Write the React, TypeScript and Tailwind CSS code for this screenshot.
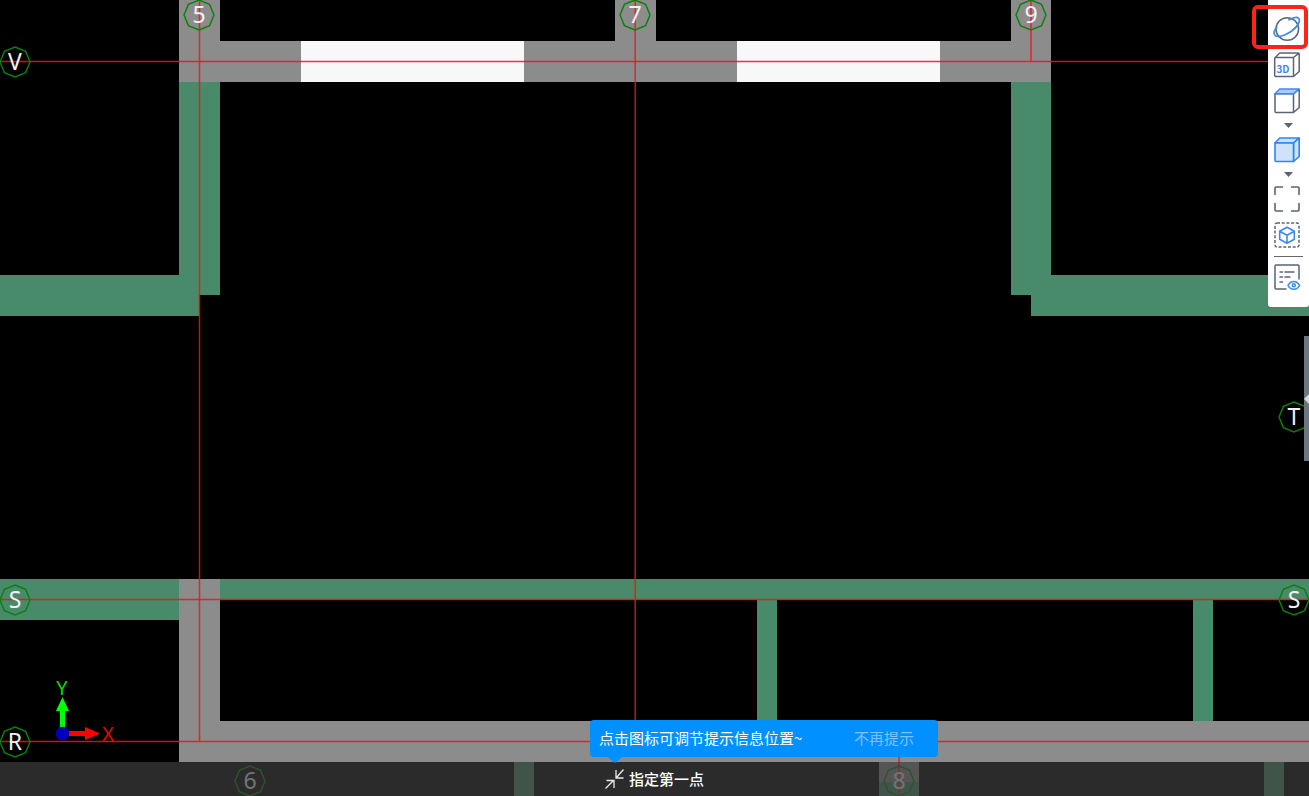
import type { ReactNode } from 'react'

type Label = { text: string; x: number; y: number }

const LABELS: Label[] = [
    { text: '5', x: 199, y: 15 },
    { text: '7', x: 635, y: 15 },
    { text: '9', x: 1031, y: 15 },
    { text: 'V', x: 15, y: 62 },
    { text: 'T', x: 1294, y: 417 },
    { text: 'S', x: 15, y: 600 },
    { text: 'S', x: 1294, y: 600 },
    { text: 'R', x: 15, y: 742 },
    { text: '6', x: 250, y: 781 },
    { text: '8', x: 899, y: 781 },
]

const AxisLabel = ({ text, x, y }: Label) => (
    <g transform={`translate(${x} ${y})`}>
        <polygon
            points="0,-15 10.6,-10.6 15,0 10.6,10.6 0,15 -10.6,10.6 -15,0 -10.6,-10.6"
            fill="none"
            stroke="#0a800a"
            strokeWidth="1.4"
        />
        <text y="8" textAnchor="middle" fontSize="23" fill="#f2f2f2">
            {text}
        </text>
    </g>
)

const FloorPlan = () => (
    <svg
        className="absolute inset-0 h-full w-full font-['Noto_Sans',sans-serif]"
        viewBox="0 0 1309 796"
        preserveAspectRatio="xMinYMin slice"
        role="img"
        aria-label="平面图"
    >
        {/* shear walls */}
        <g fill="#478b6a">
            <path d="M179 82h41v213h-21v21H0v-41h179z" />
            <path d="M1011 82h40v193h258v41h-278v-21h-20z" />
            <path d="M0 579h179v41H0z" />
            <path d="M219 579h1090v21H219z" />
            <path d="M757 600h20v121h-20z" />
            <path d="M1193 600h20v121h-20z" />
            <path d="M514 762h20v34h-20z" />
            <path d="M1264 762h20v34h-20z" />
            <path d="M879 782h40v14h-40z" />
        </g>

        {/* beams and columns */}
        <g fill="#8c8c8c">
            <path d="M179 0h41v41h395V0h41v41h355V0h40v82H179z" />
            <path d="M179 579h41v142h1089v41H179z" />
            <path d="M879 762h40v20h-40z" />
        </g>

        {/* windows */}
        <g fill="#f8f8f8">
            <path d="M301 41h223v41H301z" />
            <path d="M737 41h203v41H737z" />
        </g>

        {/* grid axes */}
        <g stroke="#f01414" strokeOpacity="0.85" strokeWidth="1.5">
            <path d="M199.500 0V741" />
            <path d="M635.200 0V741" />
            <path d="M1031 0V62" />
            <path d="M899 741V796" />
            <path d="M0 61.600H1309" />
            <path d="M0 599.600H1309" />
            <path d="M0 741.500H1309" />
        </g>

        {LABELS.map((l) => (
            <AxisLabel key={`${l.text}-${l.x}`} {...l} />
        ))}

        {/* coordinate system */}
        <path d="M60 728v-17h-4l6.500-14 6.500 14h-4v17z" fill="#00ff00" />
        <path d="M69 731h16v-4l15 6.500-15 6.500v-4H69z" fill="#ff0000" />
        <circle cx="62.500" cy="733.500" r="6.800" fill="#0000b8" />
        <g fontSize="20" textAnchor="middle">
            <text x="62" y="695" fill="#00d800">
                Y
            </text>
            <text x="108" y="741" fill="#e80000">
                X
            </text>
        </g>
    </svg>
)

const Icon = ({ children }: { children: ReactNode }) => (
    <svg
        className="h-[26px] w-[26px] overflow-visible"
        viewBox="0 0 26 26"
        fill="none"
        stroke="#5b6475"
        strokeWidth="1.5"
        strokeLinecap="round"
        strokeLinejoin="round"
        aria-hidden="true"
    >
        {children}
    </svg>
)

const OrbitIcon = () => (
    <Icon>
        <circle cx="13.300" cy="13" r="11.300" />
        <path
            d="M15 3.800C19 1.600 23 .8 24.600 2.300C27 5 23.500 11 17 15.500C10.500 20 3.500 21.800 1 19.300C-.6 17.500 .3 14 2.800 11"
            stroke="#3d8bf2"
            strokeWidth="1.700"
        />
    </Icon>
)

const Cube3dIcon = () => (
    <Icon>
        <path d="M1.700 5.500h17.800v19H1.700a1 1 0 0 1-1-1v-17a1 1 0 0 1 1-1zM1 5.700L5.700 1h18.500q1 0 1 1v17.500l-5.700 5M19.500 5.500L25 1.200" />
        <text
            x="9"
            y="21"
            textAnchor="middle"
            fontSize="10"
            fontWeight="700"
            fill="#3d8bf2"
            stroke="none"
        >
            3D
        </text>
    </Icon>
)

const WireCubeIcon = () => (
    <Icon>
        <path d="M1 5.800h18.500v18.700H2a1 1 0 0 1-1-1zM25.200 1.500v18l-5.700 5M19.500 5.800L25 1.200" />
        <path d="M1 5.800L5.700 1H25l-5.500 4.800z" fill="#a9cdfa" stroke="#3d8bf2" />
    </Icon>
)

const SolidCubeIcon = () => (
    <Icon>
        <g fill="#d0e2fa" stroke="#2c85f5" strokeWidth="1.600">
            <path d="M1 6L5.700 1H25l-5.500 5z" />
            <path d="M25.200 1v18.500l-5.700 5V6z" />
            <path d="M1 6h18.500v18.500H2a1 1 0 0 1-1-1z" />
        </g>
    </Icon>
)

const FitIcon = () => (
    <Icon>
        <path
            d="M1 8.500V2a1 1 0 0 1 1-1h6.500M17.500 1H24a1 1 0 0 1 1 1v6.500M25 17.500V24a1 1 0 0 1-1 1h-6.500M8.500 25H2a1 1 0 0 1-1-1v-6.500"
            strokeWidth="1.600"
        />
    </Icon>
)

const IsolateIcon = () => (
    <Icon>
        <rect x="1" y="1" width="24" height="24" rx="2" strokeDasharray="3 1.700" strokeLinecap="butt" />
        <path
            d="M13 5.200l7.300 4v8L13 21.300l-7.300-4.100v-8zM5.700 9.200l7.300 4 7.300-4M13 13.200v8.100"
            stroke="#3d8bf2"
            strokeWidth="1.600"
        />
    </Icon>
)

const DisplayIcon = () => (
    <Icon>
        <path d="M12 25H2a1 1 0 0 1-1-1V2a1 1 0 0 1 1-1h22a1 1 0 0 1 1 1v13" />
        <path d="M6 8h2.500M11 8h9M6 13h2.500M11 13h5M6 18h2.500" />
        <path
            d="M14 21.300C15.500 18.500 17.500 17.400 19.800 17.400S24 18.500 25.600 21.300C24 24.100 22 25.200 19.800 25.200S15.500 24.100 14 21.300z"
            stroke="#3d8bf2"
        />
        <circle cx="19.800" cy="21.300" r="1.500" stroke="#3d8bf2" />
    </Icon>
)

const ToolButton = ({ label, children }: { label: string; children: ReactNode }) => (
    <button type="button" aria-label={label} className="flex h-9 w-full items-center pl-[6px]">
        {children}
    </button>
)

const CaretButton = ({ label }: { label: string }) => (
    <button type="button" aria-label={label} className="flex h-[13px] w-full items-center justify-center">
        <svg className="h-[5px] w-[9px]" viewBox="0 0 9 5" aria-hidden="true">
            <path d="M0 0h9L4.500 5z" fill="#5b6475" />
        </svg>
    </button>
)

const ViewToolbar = () => (
    <nav
        aria-label="视图"
        className="absolute top-0 right-0 flex w-[41px] flex-col items-center rounded-b-[3px] bg-white pt-[11px] pb-3"
    >
        <ToolButton label="动态观察">
            <OrbitIcon />
        </ToolButton>
        <ToolButton label="三维">
            <Cube3dIcon />
        </ToolButton>
        <ToolButton label="视图方向">
            <WireCubeIcon />
        </ToolButton>
        <CaretButton label="更多视图方向" />
        <ToolButton label="显示样式">
            <SolidCubeIcon />
        </ToolButton>
        <CaretButton label="更多显示样式" />
        <ToolButton label="全屏">
            <FitIcon />
        </ToolButton>
        <ToolButton label="局部三维">
            <IsolateIcon />
        </ToolButton>
        <hr className="mt-[3px] mb-[2px] w-[29px] border-t border-[#666666]" />
        <ToolButton label="显示设置">
            <DisplayIcon />
        </ToolButton>

        {/* highlight around the orbit tool */}
        <div className="pointer-events-none absolute top-[5px] right-[1px] h-11 w-14 rounded-[6px] border-4 border-[#ff2418]" />
    </nav>
)

const PromptBar = () => (
    <footer className="relative mt-auto flex h-[34px] items-center justify-center bg-[#3d3d3d]/70">
        <div className="relative flex items-center gap-1">
            <button type="button" aria-label="调节提示信息位置">
                <svg
                    className="h-5 w-5"
                    viewBox="0 0 20 20"
                    fill="none"
                    stroke="#ececec"
                    strokeWidth="1.300"
                    aria-hidden="true"
                >
                    <path d="M18.500 .5l-7 8M11 1v8h7.500M.5 19.500l8-8M1.500 11.500h7.500V19" />
                </svg>
            </button>
            <span className="text-[15px] leading-5 font-medium whitespace-nowrap text-white">指定第一点</span>

            <div
                role="tooltip"
                className="absolute bottom-8 -left-[15px] flex h-[37px] w-[348px] items-center justify-between rounded-[4px] bg-[#0090ff] pr-6 pb-[2px] pl-[9px] text-[15px] leading-5 whitespace-nowrap"
            >
                <span className="text-white">点击图标可调节提示信息位置~</span>
                <button type="button" className="text-[#7cc3ff]">
                    不再提示
                </button>
                <svg className="absolute top-full left-[18px] h-[6px] w-[14px]" viewBox="0 0 14 6" aria-hidden="true">
                    <path d="M0 0h14L8 5.500H6z" fill="#0090ff" />
                </svg>
            </div>
        </div>
    </footer>
)

export default function App() {
    return (
        <main className="relative flex min-h-screen flex-col overflow-hidden bg-black font-['Noto_Sans_CJK_SC',sans-serif]">
            <FloorPlan />
            <PromptBar />
            <ViewToolbar />
            <button
                type="button"
                aria-label="展开侧栏"
                className="absolute top-[336px] right-0 flex h-[125px] w-[5px] items-center bg-[#6b7682]"
            >
                <svg className="h-[10px] w-[5px]" viewBox="0 0 5 10" aria-hidden="true">
                    <path d="M5 0v10L0 5z" fill="#d4d8dc" />
                </svg>
            </button>
        </main>
    )
}
